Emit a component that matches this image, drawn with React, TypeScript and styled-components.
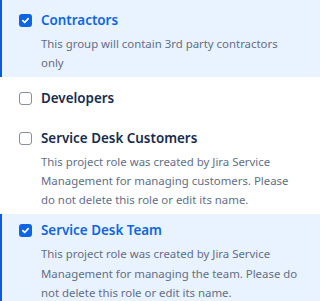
import React, { useState } from "react";
import styled, { createGlobalStyle } from "styled-components";

const GlobalStyle = createGlobalStyle`
  html, body {
    margin: 0;
    padding: 0;
    background: #ffffff;
  }
  body {
    font-family: "Segoe UI", "Noto Sans", "Open Sans", sans-serif;
    -webkit-font-smoothing: antialiased;
  }
`;

interface SelectedProps {
  $selected: boolean;
}

const RoleList = styled.ul`
  list-style: none;
  margin: 0;
  padding: 0;
  width: 320px;
  display: flex;
  flex-direction: column;
`;

const RoleRow = styled.li<SelectedProps>`
  display: grid;
  grid-template-columns: 13px 1fr;
  column-gap: 9px;
  padding: ${(p) => (p.$selected ? "4px" : "9px")} 18px 5px 17px;
  border-left: 2px solid ${(p) => (p.$selected ? "#0b5cd5" : "transparent")};
  background: ${(p) => (p.$selected ? "#e9f2ff" : "#ffffff")};
  cursor: pointer;

  &:first-child {
    padding-top: 8px;
  }
`;

const BoxCell = styled.div`
  height: 24px;
  display: flex;
  align-items: center;
`;

const Box = styled.span<SelectedProps>`
  box-sizing: border-box;
  width: 13px;
  height: 13px;
  border-radius: 3px;
  display: flex;
  align-items: center;
  justify-content: center;
  background: ${(p) => (p.$selected ? "#0c66e4" : "#ffffff")};
  border: ${(p) => (p.$selected ? "none" : "1.5px solid #8590a2")};
`;

const Title = styled.div<SelectedProps>`
  font-size: 13.4px;
  line-height: 24px;
  font-weight: 600;
  color: ${(p) => (p.$selected ? "#0c66e4" : "#172b4d")};
  margin-bottom: 2px;
`;

const Description = styled.p`
  grid-column: 2;
  margin: 0;
  font-size: 11.4px;
  line-height: 19.1px;
  color: #626f86;
`;

const roles = [
  {
    id: "contractors",
    name: "Contractors",
    description: "This group will contain 3rd party contractors only",
  },
  { id: "developers", name: "Developers", description: "" },
  {
    id: "customers",
    name: "Service Desk Customers",
    description:
      "This project role was created by Jira Service Management for managing customers. Please do not delete this role or edit its name.",
  },
  {
    id: "team",
    name: "Service Desk Team",
    description:
      "This project role was created by Jira Service Management for managing the team. Please do not delete this role or edit its name.",
  },
];

function Check() {
  return (
    <svg width="9" height="9" viewBox="0 0 10 10" fill="none">
      <path
        d="M2 5.2 L4.1 7.2 L8 2.9"
        stroke="#ffffff"
        strokeWidth="1.9"
        strokeLinecap="round"
        strokeLinejoin="round"
      />
    </svg>
  );
}

export default function App() {
  const [selected, setSelected] = useState<string[]>(["contractors", "team"]);

  const toggle = (id: string) => {
    setSelected((prev) =>
      prev.includes(id) ? prev.filter((x) => x !== id) : [...prev, id]
    );
  };

  return (
    <>
      <GlobalStyle />
      <RoleList>
        {roles.map((role) => {
          const isOn = selected.includes(role.id);
          return (
            <RoleRow
              key={role.id}
              $selected={isOn}
              onClick={() => toggle(role.id)}
            >
              <BoxCell>
                <Box $selected={isOn}>{isOn && <Check />}</Box>
              </BoxCell>
              <Title $selected={isOn}>{role.name}</Title>
              {role.description && (
                <Description>{role.description}</Description>
              )}
            </RoleRow>
          );
        })}
      </RoleList>
    </>
  );
}
